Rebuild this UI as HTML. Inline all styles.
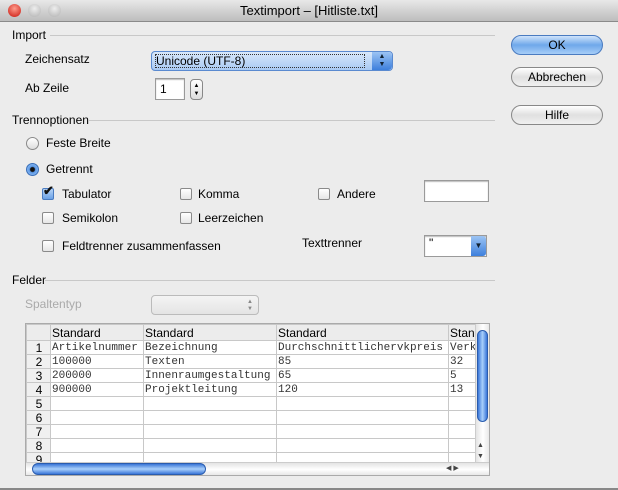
<!DOCTYPE html>
<html><head><meta charset="utf-8"><style>
*{margin:0;padding:0;box-sizing:border-box}
body{width:618px;height:490px;overflow:hidden;background:#ececec;font-family:"Liberation Sans",sans-serif;font-size:12px;color:#000;position:relative}
.a{position:absolute;white-space:nowrap}
.t{line-height:14px}
.title{left:0;top:0;width:618px;height:22px;background:linear-gradient(#e8e8e8,#bdbdbd);border-bottom:1px solid #8a8a8a;text-align:center;font-size:13px;line-height:22px}
.dot{width:13px;height:13px;border-radius:50%;top:4px}
.line{height:1px;background:#c8c8c8}
.btn{width:92px;height:20px;border-radius:10px;border:1px solid #888;background:linear-gradient(#fff,#e0e0e0 50%,#f0f0f0);text-align:center;line-height:18px;font-size:12px}
.ok{background:linear-gradient(#cfe3fb,#6fa8ea 50%,#a6cdf7);border-color:#4a7bc0}
.cb{width:12px;height:12px;border:1px solid #8a8a8a;border-radius:2px;background:linear-gradient(#fff,#e6e6e6)}
.rd{width:13px;height:13px;border:1px solid #8a8a8a;border-radius:50%;background:linear-gradient(#fff,#ddd)}
.field{background:#fff;border:1px solid #9a9a9a;box-shadow:inset 0 1px 1px #bbb}
table{border-collapse:collapse;font-family:"Liberation Mono",monospace;font-size:11px}
td{border:1px solid #c8c8c8;height:14px;padding:0 0 0 1px;line-height:12px;overflow:hidden;white-space:nowrap;color:#333}
td.n{background:#f0f0f0;font-family:"Liberation Sans",sans-serif;font-size:12px;text-align:center;color:#000}
tr.h td{background:#ececec;font-family:"Liberation Sans",sans-serif;font-size:12px;color:#000;height:16px}
</style></head><body>
<div class="a title">Textimport – [Hitliste.txt]</div>
<div class="a dot" style="left:8px;background:radial-gradient(circle at 50% 35%,#ff9c8c,#c8140c)"></div>
<div class="a dot" style="left:28px;background:radial-gradient(circle at 50% 35%,#eee,#b0b0b0)"></div>
<div class="a dot" style="left:48px;background:radial-gradient(circle at 50% 35%,#eee,#b0b0b0)"></div>

<div class="a t" style="left:12px;top:28px">Import</div>
<div class="a line" style="left:50px;top:35px;width:445px"></div>
<div class="a t" style="left:25px;top:52px">Zeichensatz</div>
<div class="a" style="left:151px;top:51px;width:242px;height:20px;border-radius:4px;border:1px solid #5a8ad0;background:linear-gradient(#d8e8fb,#a9caf3);"></div>
<div class="a t" style="left:155px;top:54px;width:210px;border:1px dotted #333;line-height:12px">Unicode (UTF-8)</div>
<div class="a" style="left:372px;top:52px;width:20px;height:18px;border-radius:0 4px 4px 0;background:linear-gradient(#9cc4f4,#3d7fdc);color:#123;font-size:7px;text-align:center;line-height:8px;padding-top:1px">▲<br>▼</div>
<div class="a t" style="left:25px;top:81px">Ab Zeile</div>
<div class="a field" style="left:155px;top:78px;width:30px;height:22px;padding:3px 4px">1</div>
<div class="a" style="left:190px;top:79px;width:13px;height:21px;border:1px solid #888;border-radius:4px;background:linear-gradient(#fff,#ddd);font-size:6px;text-align:center;line-height:8px;padding-top:2px">▲<br>▼</div>

<div class="a t" style="left:12px;top:113px">Trennoptionen</div>
<div class="a line" style="left:88px;top:120px;width:407px"></div>
<div class="a rd" style="left:26px;top:137px"></div>
<div class="a t" style="left:46px;top:136px">Feste Breite</div>
<div class="a rd" style="left:26px;top:163px;background:radial-gradient(circle,#111 2px,#5d9ae8 3px,#9dc6f5);border-color:#3a6fb8"></div>
<div class="a t" style="left:46px;top:162px">Getrennt</div>

<div class="a cb" style="left:42px;top:188px;background:linear-gradient(#b8d5f7,#6aa1e6);border-color:#4a7bc0"></div>
<div class="a" style="left:43px;top:184px;font-size:13px;line-height:14px;color:#111;font-weight:bold">✔</div>
<div class="a t" style="left:62px;top:187px">Tabulator</div>
<div class="a cb" style="left:180px;top:188px"></div>
<div class="a t" style="left:198px;top:187px">Komma</div>
<div class="a cb" style="left:318px;top:188px"></div>
<div class="a t" style="left:337px;top:187px">Andere</div>
<div class="a field" style="left:424px;top:180px;width:65px;height:22px"></div>
<div class="a cb" style="left:42px;top:212px"></div>
<div class="a t" style="left:62px;top:211px">Semikolon</div>
<div class="a cb" style="left:180px;top:212px"></div>
<div class="a t" style="left:198px;top:211px">Leerzeichen</div>
<div class="a cb" style="left:42px;top:240px"></div>
<div class="a t" style="left:62px;top:239px">Feldtrenner zusammenfassen</div>
<div class="a t" style="left:302px;top:236px">Texttrenner</div>
<div class="a field" style="left:424px;top:235px;width:63px;height:22px;padding:0 4px;line-height:14px">"</div>
<div class="a" style="left:471px;top:236px;width:15px;height:20px;border-radius:0 3px 3px 0;background:linear-gradient(#9cc4f4,#3d7fdc);color:#123;font-size:8px;text-align:center;line-height:20px">▼</div>

<div class="a t" style="left:12px;top:273px">Felder</div>
<div class="a line" style="left:45px;top:280px;width:450px"></div>
<div class="a t" style="left:25px;top:297px;color:#aaa">Spaltentyp</div>
<div class="a" style="left:151px;top:295px;width:108px;height:20px;border:1px solid #bbb;border-radius:4px;background:linear-gradient(#f4f4f4,#e4e4e4);font-size:6px;color:#888;text-align:right;padding:3px 5px;line-height:7px">▲<br>▼</div>

<div class="a" style="left:25px;top:323px;width:465px;height:153px;border:1px solid #aaa;background:#fff;overflow:hidden">
<table style="position:absolute;left:0;top:0;table-layout:fixed;width:500px">
<colgroup><col style="width:24px"><col style="width:93px"><col style="width:133px"><col style="width:172px"><col style="width:78px"></colgroup>
<tr class="h"><td class="n"></td><td>Standard</td><td>Standard</td><td>Standard</td><td>Standard</td></tr>
<tr><td class="n">1</td><td>Artikelnummer</td><td>Bezeichnung</td><td>Durchschnittlichervkpreis</td><td>Verkauf</td></tr>
<tr><td class="n">2</td><td>100000</td><td>Texten</td><td>85</td><td>32</td></tr>
<tr><td class="n">3</td><td>200000</td><td>Innenraumgestaltung</td><td>65</td><td>5</td></tr>
<tr><td class="n">4</td><td>900000</td><td>Projektleitung</td><td>120</td><td>13</td></tr>
<tr><td class="n">5</td><td></td><td></td><td></td><td></td></tr>
<tr><td class="n">6</td><td></td><td></td><td></td><td></td></tr>
<tr><td class="n">7</td><td></td><td></td><td></td><td></td></tr>
<tr><td class="n">8</td><td></td><td></td><td></td><td></td></tr>
<tr><td class="n">9</td><td></td><td></td><td></td><td></td></tr>
</table>
<div class="a" style="left:449px;top:0;width:15px;height:138px;background:linear-gradient(90deg,#e4e4e4,#fff,#e4e4e4);border-left:1px solid #ccc"></div>
<div class="a" style="left:451px;top:6px;width:11px;height:92px;border-radius:6px;background:linear-gradient(90deg,#3a76d8,#a9d0fb,#3a76d8);border:1px solid #2a5cae"></div>
<div class="a" style="left:451px;top:116px;font-size:7px;line-height:11px;color:#444">▲<br>▼</div>
<div class="a" style="left:0;top:138px;width:464px;height:14px;background:linear-gradient(#e4e4e4,#fff,#e4e4e4);border-top:1px solid #ccc"></div>
<div class="a" style="left:6px;top:139px;width:174px;height:12px;border-radius:6px;background:linear-gradient(#3a76d8,#a9d0fb,#3a76d8);border:1px solid #2a5cae"></div>
<div class="a" style="left:420px;top:139px;font-size:7px;line-height:12px;color:#444">◀ ▶</div>
</div>

<div class="a btn ok" style="left:511px;top:35px">OK</div>
<div class="a btn" style="left:511px;top:67px">Abbrechen</div>
<div class="a btn" style="left:511px;top:105px">Hilfe</div>
<div class="a" style="left:0;top:488px;width:618px;height:2px;background:#888"></div>
</body></html>
